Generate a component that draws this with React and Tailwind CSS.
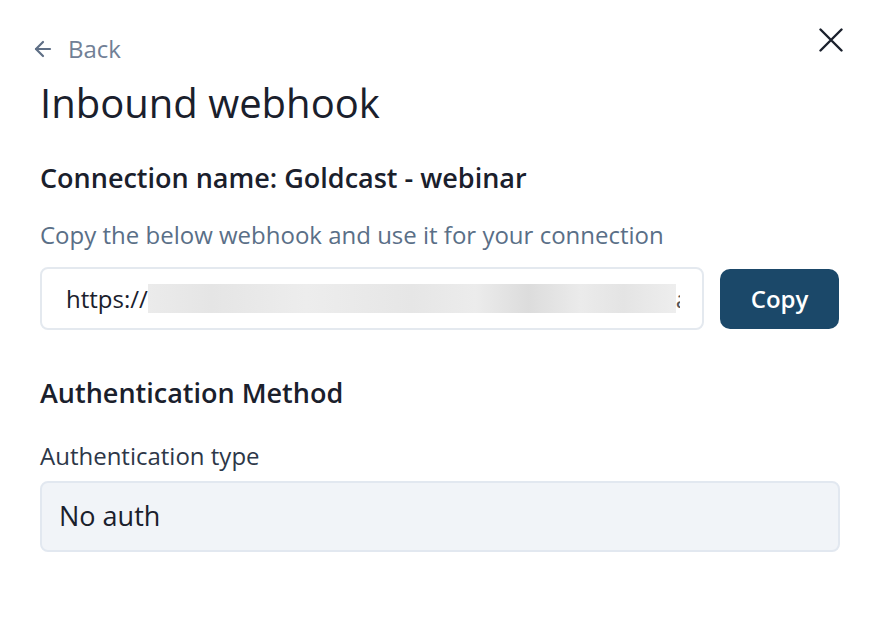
import React from 'react';
import { ArrowLeft } from 'lucide-react';

const App = () => {
  return (
    <div
      className="w-[878px] h-[620px] bg-white pl-[40px] pr-[34px] pt-[28px] text-[#1a202c]"
      style={{ fontFamily: '"Open Sans", "Noto Sans", sans-serif' }}
    >
      <div className="flex items-start justify-between">
        <a href="#" className="mt-[6px] flex items-center gap-[13px] text-[24px] leading-[30px] text-[#718096] -ml-[9px]">
          <ArrowLeft size={24} strokeWidth={2.2} className="text-[#5f6f86]" />
          <span>Back</span>
        </a>
        <button className="text-[#1a202c] mr-[1px]">
          <svg width="24" height="24" viewBox="0 0 24 24" fill="none" stroke="currentColor" strokeWidth="2.4" strokeLinecap="round">
            <path d="M1.5 1.5 22.5 22.5M22.5 1.5 1.5 22.5" />
          </svg>
        </button>
      </div>

      <h1 className="mt-[15px] text-[40px] leading-[48px] font-normal">Inbound webhook</h1>

      <h2 className="mt-[33px] text-[27px] leading-[36px] font-semibold">Connection name: Goldcast - webinar</h2>

      <p className="mt-[23px] text-[24px] leading-[32px] text-[#5a6f87]">
        Copy the below webhook and use it for your connection
      </p>

      <div className="mt-[16px] flex items-center gap-[16px]">
        <div className="flex items-center w-[664px] h-[63px] rounded-[8px] border-2 border-[#e4e9ef] pl-[24px] overflow-hidden">
          <span className="text-[24px] text-[#1a202c] whitespace-nowrap">https://</span>
          <div className="w-[528px] h-[29px] bg-[linear-gradient(90deg,#ebebeb,#e5e5e5_12%,#ededed_30%,#e6e6e6_50%,#ececec_62%,#dcdcdc_72%,#ebebeb_82%,#e4e4e4_90%,#eeeeee)]" />
          <span className="w-[4px] overflow-hidden text-[24px] text-[#555] whitespace-nowrap">a</span>
        </div>
        <button className="w-[119px] h-[60px] rounded-[10px] bg-[#1b4869] text-white text-[24px] font-semibold">
          Copy
        </button>
      </div>

      <h2 className="mt-[45px] text-[27px] leading-[36px] font-semibold">Authentication Method</h2>

      <label className="block mt-[29px] text-[24px] leading-[32px] text-[#2d3748]">Authentication type</label>

      <div className="mt-[9px] w-[800px] h-[71px] rounded-[8px] border-2 border-[#e2e8f0] bg-[#f1f4f8] flex items-center pl-[17px]">
        <span className="text-[27px] text-[#1a202c]">No auth</span>
      </div>
    </div>
  );
};

export default App;
